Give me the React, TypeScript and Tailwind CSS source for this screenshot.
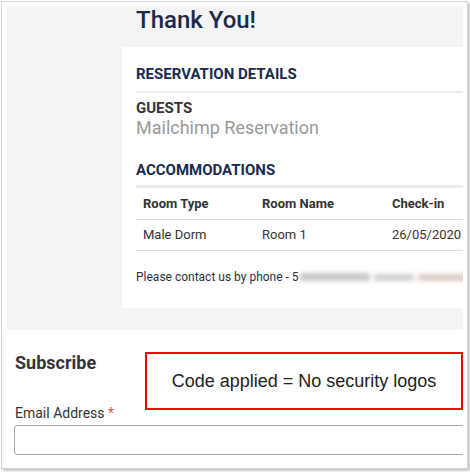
import React from 'react';

const rows = [{ type: 'Male Dorm', name: 'Room 1', checkIn: '26/05/2020' }];

export default function App() {
  return (
    <div className="w-[470px] h-[472px] bg-white font-['Roboto',sans-serif]">
      <div className="relative ml-[1px] mt-[1px] w-[467px] h-[468px] border border-[#d4d4d4] bg-white pl-[5px] pt-[4px] shadow-[2px_2px_2px_rgba(0,0,0,0.22)]">
        <div className="w-[456px] h-[459px] overflow-hidden">
          {/* confirmation area */}
          <div className="bg-[#f4f4f4] pl-[115px] pb-[22px]">
            <h1 className="h-[41px] pl-[14px] text-[24px] font-medium leading-[28px] text-[#1b2a4e]">
              Thank You!
            </h1>
            <div className="w-[400px] bg-white pl-[14px] pt-[17px] pb-[23px]">
              <h2 className="pb-[7px] text-[15px] font-bold leading-[20px] text-[#1b2a4e]">RESERVATION DETAILS</h2>
              <div className="h-[2px] bg-[#ececec]" />
              <div className="pt-[6px]">
                <div className="text-[15px] font-bold leading-[18px] text-[#333]">GUESTS</div>
                <div className="text-[18px] leading-[21px] text-[#9a9a9a]">Mailchimp Reservation</div>
              </div>
              <h2 className="pt-[22px] pb-[5px] text-[15px] font-bold leading-[20px] text-[#1b2a4e]">ACCOMMODATIONS</h2>
              <div className="h-[3px] bg-[#ececec]" />
              <table className="w-[380px] border-collapse text-[13px] text-[#333]">
                <thead>
                  <tr className="h-[31px] border-b border-[#dcdcdc]">
                    <th className="w-[126px] pl-[7px] text-left font-bold">Room Type</th>
                    <th className="w-[130px] text-left font-bold">Room Name</th>
                    <th className="text-left font-bold">Check-in</th>
                  </tr>
                </thead>
                <tbody>
                  {rows.map((r) => (
                    <tr key={r.name} className="h-[31px] border-b border-[#dcdcdc]">
                      <td className="pl-[7px]">{r.type}</td>
                      <td>{r.name}</td>
                      <td>{r.checkIn}</td>
                    </tr>
                  ))}
                </tbody>
              </table>
              <p className="pt-[18px] text-[12px] leading-[16px] text-[#2a2f45] whitespace-nowrap">
                Please contact us by phone - 5
                <span className="inline-block align-middle ml-[1px] h-[8px] w-[70px] bg-[#c9c9c9] blur-[2px]" />
                <span className="inline-block align-middle ml-[4px] h-[7px] w-[40px] bg-[#d2d2d2] blur-[2px]" />
                <span className="inline-block align-middle ml-[4px] h-[7px] w-[50px] bg-[#dccfc6] blur-[2px]" />
              </p>
            </div>
          </div>

          {/* subscribe */}
          <div className="px-[7px] pt-[21px]">
            <h3 className="pl-[1px] text-[18px] font-bold leading-[24px] text-[#333]">Subscribe</h3>
            <label className="mt-[29px] block pl-[1px] text-[14px] leading-[18px] text-[#333]">
              Email Address <span className="text-[#e05a43]">*</span>
            </label>
            <div className="mt-[3px] h-[30px] w-[470px] rounded-[3px] border border-[#a9a9a9]" />
          </div>
        </div>

        {/* annotation */}
        <div className="absolute left-[143px] top-[350px] flex h-[58px] w-[318px] items-center justify-center border-2 border-[#ff0000] bg-white font-['Liberation_Sans',sans-serif] text-[18px] text-[#222]">
          Code applied = No security logos
        </div>
      </div>
    </div>
  );
}
